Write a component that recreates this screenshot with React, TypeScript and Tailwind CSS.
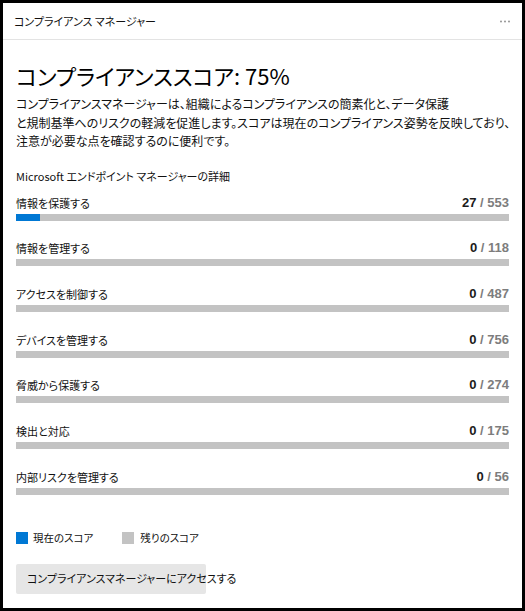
const rows = [
  { label: "情報を保護する", current: 27, total: 553 },
  { label: "情報を管理する", current: 0, total: 118 },
  { label: "アクセスを制御する", current: 0, total: 487 },
  { label: "デバイスを管理する", current: 0, total: 756 },
  { label: "脅威から保護する", current: 0, total: 274 },
  { label: "検出と対応", current: 0, total: 175 },
  { label: "内部リスクを管理する", current: 0, total: 56 },
];

function ScoreRow({ label, current, total }: { label: string; current: number; total: number }) {
  return (
    <div className="flex flex-col">
      <div className="flex h-4 items-center justify-between">
        <span className="text-[11px] leading-4 text-[#111]">{label}</span>
        <span className="font-['Liberation_Sans',sans-serif] text-[13px] font-bold leading-4">
          <span className="text-[#1b1b1b]">{current}</span>
          <span className="text-[#7d7d7d]"> / {total}</span>
        </span>
      </div>
      <div className="mt-[3px] flex h-[7px] w-full bg-[#c3c3c3]">
        <div className="h-full bg-[#0078d4]" style={{ width: `${(current / total) * 100}%` }} />
      </div>
    </div>
  );
}

export default function App() {
  return (
    <div className="flex h-[611px] w-[525px] flex-col border-[3px] border-black bg-white font-['Noto_Sans_CJK_JP',sans-serif] [font-feature-settings:'palt'] text-black">
      {/* header */}
      <div className="flex h-[37px] shrink-0 items-center justify-between border-b border-[#e3e3e3] pl-[11px] pr-[12px]">
        <span className="text-[11px] leading-4 text-[#111]">コンプライアンス マネージャー</span>
        <svg width="10" height="3" viewBox="0 0 10 3" className="mt-px">
          <circle cx="1" cy="1.5" r="0.9" fill="#8a8a8a" />
          <circle cx="5" cy="1.5" r="0.9" fill="#8a8a8a" />
          <circle cx="9" cy="1.5" r="0.9" fill="#8a8a8a" />
        </svg>
      </div>

      <div className="flex flex-col px-[13px]">
        <h1 className="mt-[19px] text-[22px] font-normal leading-8">コンプライアンススコア: 75%</h1>
        <p className="mt-[4px] whitespace-nowrap text-[12px] leading-[18.5px] text-[#111]">
          コンプライアンスマネージャーは、組織によるコンプライアンスの簡素化と、データ保護
          <br />
          と規制基準へのリスクの軽減を促進します。スコアは現在のコンプライアンス姿勢を反映しており、
          <br />
          注意が必要な点を確認するのに便利です。
        </p>
        <p className="mt-[16px] text-[11px] leading-[18px] text-[#111]">Microsoft エンドポイント マネージャーの詳細</p>

        <div className="mt-[10px] flex flex-col gap-[19.7px]">
          {rows.map((r) => (
            <ScoreRow key={r.label} {...r} />
          ))}
        </div>

        <div className="mt-[35px] flex h-4 items-center text-[10.5px] leading-4 text-[#111]">
          <span className="h-3 w-3 bg-[#0078d4]" />
          <span className="ml-[5px]">現在のスコア</span>
          <span className="ml-[29px] h-3 w-3 bg-[#c3c3c3]" />
          <span className="ml-[6px]">残りのスコア</span>
        </div>

        <button className="mt-[18px] flex h-[30px] w-[190px] items-center whitespace-nowrap rounded-[2px] bg-[#e6e6e6] pl-[11px] text-[11px] text-[#111]">
          コンプライアンスマネージャーにアクセスする
        </button>
      </div>
    </div>
  );
}
